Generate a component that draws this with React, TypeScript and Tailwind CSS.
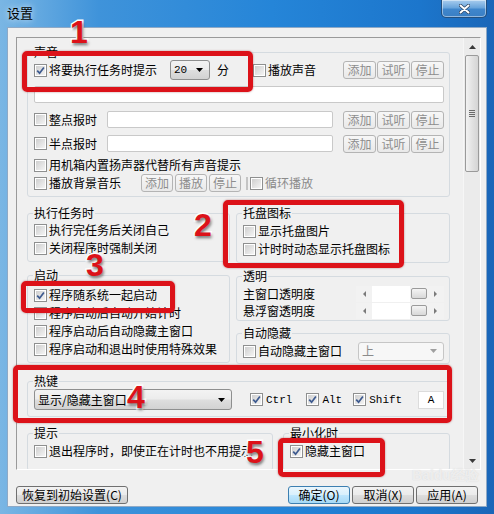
import React from "react";

const F = "font-['Noto_Sans_CJK_SC','Noto_Sans_CJK_JP',sans-serif]";
const MONO = "font-['Liberation_Mono','DejaVu_Sans_Mono',monospace]";

function Check({ checked = false }: { checked?: boolean }) {
  return (
    <span className="w-[13px] h-[13px] shrink-0 border border-[#8e8f8f] bg-white p-[1px] flex">
      <span className="flex-1 flex items-center justify-center bg-[linear-gradient(135deg,#cfcfcf,#f4f4f4)]">
        {checked && (
          <svg width="9" height="9" viewBox="0 0 9 9">
            <path d="M1.2 4.6 L3.6 7.2 L7.9 1.4" stroke="#3d5a8f" strokeWidth="1.7" fill="none" />
          </svg>
        )}
      </span>
    </span>
  );
}

function CRow({
  label,
  checked,
  gray,
  className = "",
}: {
  label: string;
  checked?: boolean;
  gray?: boolean;
  className?: string;
}) {
  return (
    <div className={`flex items-center gap-[2px] h-[18px] whitespace-nowrap ${className}`}>
      <Check checked={checked} />
      <span className={gray ? "text-[#8b8b8b]" : ""}>{label}</span>
    </div>
  );
}

function Group({
  title,
  className = "",
  children,
}: {
  title: string;
  className?: string;
  children?: React.ReactNode;
}) {
  return (
    <fieldset className={`border border-[#d5dbe0] rounded-[3px] pl-[6px] pr-[5px] min-w-0 ${className}`}>
      <legend className="px-[1px] -ml-[1px] leading-[16px] h-[16px]">{title}</legend>
      {children}
    </fieldset>
  );
}

function SmallBtn({ text, w = "w-[33px]" }: { text: string; w?: string }) {
  return (
    <div
      className={`${w} h-[18px] shrink-0 rounded-[3px] border border-[#b4b4b4] bg-[linear-gradient(#f7f7f7,#e9e9e9)] text-[#8d8d8d] flex items-center justify-center`}
    >
      {text}
    </div>
  );
}

function Combo({
  text,
  w,
  h = "h-[20px]",
  disabled,
  mono,
}: {
  text: string;
  w: string;
  h?: string;
  disabled?: boolean;
  mono?: boolean;
}) {
  return (
    <div
      className={`${h} ${w} shrink-0 rounded-[3px] border flex items-center pl-[3px] pr-[6px] ${
        disabled
          ? "border-[#c6c6c6] bg-[#f7f7f7] text-[#8b8b8b]"
          : "border-[#8e8f8f] bg-[linear-gradient(#f3f3f3_0%,#ececec_48%,#dedede_52%,#d2d2d2_100%)]"
      }`}
    >
      <span className={`flex-1 ${mono ? MONO + " text-[11px]" : ""}`}>{text}</span>
      <svg width="7" height="4" viewBox="0 0 7 4">
        <path d="M0 0h7L3.5 4z" fill={disabled ? "#a0a0a0" : "#000"} />
      </svg>
    </div>
  );
}

function Slider() {
  return (
    <div className="ml-auto w-[88px] h-[16px] flex items-center bg-[#f2f2f2]">
      <div className="w-[16px] flex justify-center">
        <svg width="3" height="6" viewBox="0 0 3 6">
          <path d="M3 0v6L0 3z" fill="#7a7a7a" />
        </svg>
      </div>
      <div className="w-[38px] h-[16px] bg-white" />
      <div className="w-[16px] h-[11px] ml-[1px] rounded-[2px] border border-[#9a9a9a] bg-[linear-gradient(#f4f4f4,#d8d8d8)]" />
      <div className="flex-1 flex justify-center">
        <svg width="3" height="6" viewBox="0 0 3 6">
          <path d="M0 0v6L3 3z" fill="#7a7a7a" />
        </svg>
      </div>
    </div>
  );
}

function Btn({ text, primary, w }: { text: string; primary?: boolean; w: string }) {
  return (
    <div
      className={`${w} h-[18px] shrink-0 rounded-[3px] border flex items-center justify-center ${
        primary
          ? "border-[#3c7fb1] bg-[linear-gradient(#eaf6fd_0%,#d9f0fc_48%,#bee6fd_52%,#a7d9f5_100%)]"
          : "border-[#707070] bg-[linear-gradient(#f2f2f2_0%,#ebebeb_48%,#dddddd_52%,#cfcfcf_100%)]"
      }`}
    >
      {text}
    </div>
  );
}

function RedBox({ className }: { className: string }) {
  return (
    <div
      className={`absolute border-[5px] border-[#dc1219] rounded-[5px] shadow-[0_0_2px_rgba(120,0,0,0.5)] pointer-events-none ${className}`}
    />
  );
}

function Num({ n, className }: { n: string; className: string }) {
  return (
    <div
      className={`absolute font-['Liberation_Sans',Arial,sans-serif] font-bold text-[32px] leading-none text-[#dc1219] [-webkit-text-stroke:3px_#ffffff] [paint-order:stroke_fill] [text-shadow:1px_2px_3px_rgba(0,0,0,0.55)] ${className}`}
    >
      {n}
    </div>
  );
}

export default function App() {
  return (
    <div
      className={`w-[494px] h-[514px] relative overflow-hidden flex flex-col text-[12px] leading-[16px] text-black ${F} bg-[linear-gradient(90deg,#7ab6e4_0%,#3f93da_20%,#2585d8_55%,#1c76cc_85%,#1a66b8_100%)]`}
    >
      {/* title bar */}
      <div className="h-[27px] shrink-0 flex items-start justify-between">
        <span className="pl-[7px] pt-[5px] text-[13px] [text-shadow:0_0_6px_rgba(255,255,255,0.9)]">设置</span>
        <div className="mr-[7px] w-[46px] h-[18px] rounded-b-[5px] border border-t-0 border-[#24507e] bg-[linear-gradient(#a9cdee,#6aa5dc_45%,#3f86cc_55%,#3a7fc4)] shadow-[inset_0_0_0_1px_rgba(255,255,255,0.45)] flex items-center justify-center">
          <svg width="11" height="10" viewBox="0 0 11 10">
            <path d="M1.5 1.5 L9.5 8.5 M9.5 1.5 L1.5 8.5" stroke="#2a3f5c" strokeWidth="3.4" strokeLinecap="round" />
            <path d="M1.5 1.5 L9.5 8.5 M9.5 1.5 L1.5 8.5" stroke="#ffffff" strokeWidth="2" strokeLinecap="round" />
          </svg>
        </div>
      </div>

      {/* client */}
      <div className="flex-1 mx-[7px] mb-[7px] bg-[#f0f0f0] border border-[#8ea9c6] flex flex-col">
        {/* scroll panel */}
        <div className="mt-[9px] ml-[8px] mr-[5px] h-[433px] shrink-0 border border-t-[#9a9a9a] border-l-[#9a9a9a] border-r-white border-b-white flex overflow-hidden">
          <div className="flex-1 min-w-0 overflow-hidden pl-[10px] pt-[6px]">
            {/* 声音 */}
            <Group title="声音" className="w-[423px] pb-[4px]">
              <div className="h-[20px] flex items-center whitespace-nowrap">
                <CRow label="将要执行任务时提示" checked />
                <div className="ml-[13px]">
                  <Combo text="20" w="w-[40px]" mono />
                </div>
                <span className="ml-[7px]">分</span>
                <CRow label="播放声音" className="ml-[24px]" />
                <div className="ml-auto flex gap-[1px]">
                  <SmallBtn text="添加" />
                  <SmallBtn text="试听" />
                  <SmallBtn text="停止" />
                </div>
              </div>
              <div className="mt-[6px] h-[17px] w-[410px] rounded-[2px] border border-[#c9c9c9] bg-white" />
              <div className="mt-[8px] h-[17px] flex items-center">
                <CRow label="整点报时" />
                <div className="ml-[10px] w-[226px] h-[17px] rounded-[2px] border border-[#c9c9c9] bg-white" />
                <div className="ml-auto flex gap-[1px]">
                  <SmallBtn text="添加" />
                  <SmallBtn text="试听" />
                  <SmallBtn text="停止" />
                </div>
              </div>
              <div className="mt-[7px] h-[17px] flex items-center">
                <CRow label="半点报时" />
                <div className="ml-[10px] w-[226px] h-[17px] rounded-[2px] border border-[#c9c9c9] bg-white" />
                <div className="ml-auto flex gap-[1px]">
                  <SmallBtn text="添加" />
                  <SmallBtn text="试听" />
                  <SmallBtn text="停止" />
                </div>
              </div>
              <CRow label="用机箱内置扬声器代替所有声音提示" className="mt-[4px]" />
              <div className="h-[18px] flex items-center">
                <CRow label="播放背景音乐" />
                <div className="ml-[20px] flex gap-[2px]">
                  <SmallBtn text="添加" w="w-[32px]" />
                  <SmallBtn text="播放" w="w-[32px]" />
                  <SmallBtn text="停止" w="w-[32px]" />
                </div>
                <div className="ml-[5px] w-[2px] h-[13px] bg-[#c4c4c4]" />
                <CRow label="循环播放" gray className="ml-[2px]" />
              </div>
            </Group>

            {/* middle groups */}
            <div className="flex gap-[6px] mt-[8px]">
              <div className="w-[203px] flex flex-col">
                <Group title="执行任务时" className="pb-[4px]">
                  <CRow label="执行完任务后关闭自己" />
                  <CRow label="关闭程序时强制关闭" />
                </Group>
                <Group title="启动" className="mt-[5px] pb-[4px]">
                  <CRow label="程序随系统一起启动" checked className="mt-[3px]" />
                  <CRow label="程序启动后自动开始计时" />
                  <CRow label="程序启动后自动隐藏主窗口" />
                  <CRow label="程序启动和退出时使用特殊效果" />
                </Group>
              </div>
              <div className="w-[214px] flex flex-col">
                <Group title="托盘图标" className="pb-[4px]">
                  <CRow label="显示托盘图片" className="mt-[1px]" />
                  <CRow label="计时时动态显示托盘图标" />
                </Group>
                <Group title="透明" className="mt-[5px] pb-[1px]">
                  <div className="mt-[1px] h-[17px] flex items-center">
                    <span>主窗口透明度</span>
                    <Slider />
                  </div>
                  <div className="h-[17px] flex items-center">
                    <span>悬浮窗透明度</span>
                    <Slider />
                  </div>
                </Group>
                <Group title="自动隐藏" className="mt-[4px] pb-[2px]">
                  <div className="h-[20px] flex items-center">
                    <CRow label="自动隐藏主窗口" />
                    <div className="ml-auto">
                      <Combo text="上" w="w-[86px]" h="h-[19px]" disabled />
                    </div>
                  </div>
                </Group>
              </div>
            </div>

            {/* 热键 */}
            <Group title="热键" className="w-[423px] mt-[9px] pb-[6px]">
              <div className="h-[21px] flex items-center whitespace-nowrap">
                <Combo text="显示/隐藏主窗口" w="w-[198px]" h="h-[21px]" />
                <div className="ml-[18px] flex items-center gap-[3px]">
                  <Check checked />
                  <span className={`${MONO} text-[11px]`}>Ctrl</span>
                </div>
                <div className="ml-[14px] flex items-center gap-[3px]">
                  <Check checked />
                  <span className={`${MONO} text-[11px]`}>Alt</span>
                </div>
                <div className="ml-[11px] flex items-center gap-[3px]">
                  <Check checked />
                  <span className={`${MONO} text-[11px]`}>Shift</span>
                </div>
                <div
                  className={`ml-auto w-[26px] h-[18px] border border-[#dcdcdc] bg-white flex items-center justify-center ${MONO} text-[11px]`}
                >
                  A
                </div>
              </div>
            </Group>

            {/* bottom groups */}
            <div className="flex gap-[10px] mt-[8px]">
              <Group title="提示" className="w-[246px] pb-[10px] overflow-hidden">
                <CRow label="退出程序时，即使正在计时也不用提示" className="mt-[1px]" />
              </Group>
              <Group title="最小化时" className="w-[167px] pb-[10px]">
                <CRow label="隐藏主窗口" checked className="mt-[1px]" />
              </Group>
            </div>
          </div>

          {/* vertical scrollbar */}
          <div className="w-[17px] shrink-0 bg-[#ebebeb] border-l border-[#f6f6f6] flex flex-col">
            <div className="h-[17px] flex items-center justify-center">
              <svg width="7" height="4" viewBox="0 0 7 4">
                <path d="M0 4h7L3.5 0z" fill="#3a3a3a" />
              </svg>
            </div>
            <div className="mx-[1px] h-[117px] rounded-[2px] border border-[#9a9a9a] bg-[linear-gradient(90deg,#f2f2f2,#e2e2e2_50%,#d4d4d4)] flex items-center justify-center">
              <div className="flex flex-col gap-[1px]">
                <div className="w-[6px] h-[1px] bg-[#6a6a6a]" />
                <div className="w-[6px] h-[1px] bg-[#6a6a6a]" />
                <div className="w-[6px] h-[1px] bg-[#6a6a6a]" />
                <div className="w-[6px] h-[1px] bg-[#6a6a6a]" />
              </div>
            </div>
            <div className="flex-1" />
            <div className="h-[17px] flex items-center justify-center">
              <svg width="7" height="4" viewBox="0 0 7 4">
                <path d="M0 0h7L3.5 4z" fill="#3a3a3a" />
              </svg>
            </div>
          </div>
        </div>

        {/* bottom buttons */}
        <div className="mt-[16px] ml-[8px] mr-[8px] flex items-center">
          <Btn text="恢复到初始设置(C)" w="w-[112px]" />
          <div className="ml-auto flex gap-[2px]">
            <Btn text="确定(O)" w="w-[62px]" primary />
            <Btn text="取消(X)" w="w-[62px]" />
            <Btn text="应用(A)" w="w-[62px]" />
          </div>
        </div>
      </div>

      {/* watermark */}
      <div className="absolute left-[412px] top-[467px] text-[14px] leading-[16px] font-bold text-white/60 [text-shadow:0_0_1px_rgba(180,180,180,0.5)] font-['Liberation_Sans',sans-serif] pointer-events-none">
        Baidu经验
      </div>

      {/* annotations */}
      <RedBox className="left-[22px] top-[51px] w-[231px] h-[41px]" />
      <RedBox className="left-[223px] top-[200px] w-[181px] h-[68px]" />
      <RedBox className="left-[21px] top-[281px] w-[154px] h-[32px]" />
      <RedBox className="left-[13px] top-[365px] w-[439px] h-[58px]" />
      <RedBox className="left-[278px] top-[438px] w-[107px] h-[39px]" />

      <Num n="1" className="left-[70px] top-[16px]" />
      <Num n="2" className="left-[194px] top-[209px]" />
      <Num n="3" className="left-[86px] top-[249px]" />
      <Num n="4" className="left-[127px] top-[381px]" />
      <Num n="5" className="left-[246px] top-[436px]" />
    </div>
  );
}
